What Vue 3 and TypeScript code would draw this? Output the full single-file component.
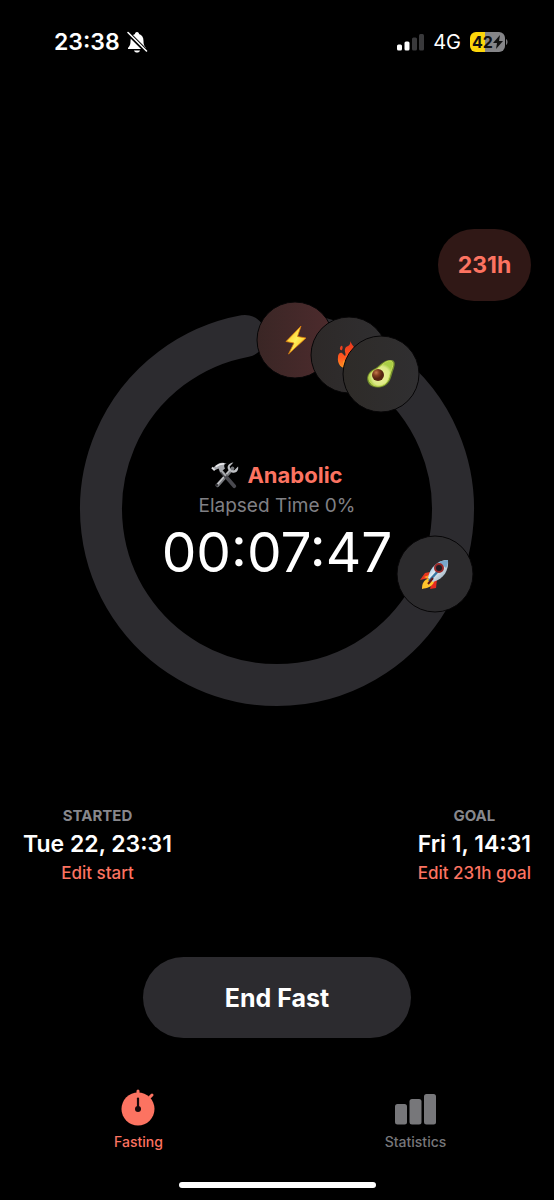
<script setup lang="ts">
interface Stage {
  name: string
  icon: 'bolt' | 'fire' | 'avocado' | 'rocket'
  x: number
  y: number
  fill: string
}

const stages: Stage[] = [
  { name: 'Catabolic', icon: 'bolt', x: 215, y: 40, fill: 'url(#stage-warm)' },
  { name: 'Fat burning', icon: 'fire', x: 269, y: 55, fill: 'url(#stage-grey)' },
  { name: 'Ketosis', icon: 'avocado', x: 301, y: 74, fill: 'url(#stage-olive)' },
  { name: 'Deep ketosis', icon: 'rocket', x: 355, y: 274, fill: '#2c2b2d' },
]

const times = [
  { label: 'STARTED', value: 'Tue 22, 23:31', action: 'Edit start' },
  { label: 'GOAL', value: 'Fri 1, 14:31', action: 'Edit 231h goal' },
]
</script>

<template>
  <div class="screen">
    <header class="status">
      <div class="status-group">
        <span class="clock">23:38</span>
        <svg class="bell" width="22" height="24" viewBox="0 0 22 24" aria-label="Silent">
          <path d="M11 2C9.500 2 9 3 9 4C6 5 4.500 7.500 4.500 11C4.500 15 3.500 16 2 18V19H20V18C18.500 16 17.500 15 17.500 11C17.500 7.500 16 5 13 4C13 3 12.500 2 11 2Z" fill="#fff" />
          <path d="M8 20.500H14C13.500 22 12.500 22.500 11 22.500S8.500 22 8 20.500Z" fill="#fff" />
          <path d="M2 3L20 21" stroke="#000" stroke-width="4" />
          <path d="M2 2.500L20.500 21" stroke="#fff" stroke-width="1.600" stroke-linecap="round" />
        </svg>
      </div>
      <div class="status-group right">
        <svg width="28" height="18" viewBox="0 0 28 18" aria-label="Signal">
          <rect x="1" y="11.500" width="5" height="6" rx="1.500" fill="#fff" />
          <rect x="8.500" y="8.500" width="5" height="9" rx="1.500" fill="#fff" />
          <rect x="16" y="4.500" width="5" height="13" rx="1.500" fill="#39393b" />
          <rect x="23" y="1" width="5" height="16.500" rx="1.500" fill="#39393b" />
        </svg>
        <span class="network">4G</span>
        <span class="battery">
          <span class="battery-text">42</span>
          <svg width="10" height="14" viewBox="0 0 10 14" aria-hidden="true">
            <path d="M7 0L0 8H4L3 14L10 6H6Z" fill="#111" />
          </svg>
        </span>
        <svg class="battery-tip" width="2" height="8" viewBox="0 0 2 8" aria-hidden="true">
          <path d="M0 1C2 2 2 6 0 7Z" fill="#77777a" />
        </svg>
      </div>
    </header>

    <main class="content">
      <button class="goal-pill" type="button">231h</button>

      <section class="dial">
        <svg class="ring" viewBox="0 0 395 410" aria-label="Fasting progress">
          <defs>
            <linearGradient id="stage-warm" x1="0" y1="0" x2="1" y2="0">
              <stop offset="0" stop-color="#3a2625" />
              <stop offset="1" stop-color="#4d2b2d" />
            </linearGradient>
            <linearGradient id="stage-grey" x1="0" y1="0" x2="1" y2="0">
              <stop offset="0" stop-color="#2d2928" />
              <stop offset="1" stop-color="#302f31" />
            </linearGradient>
            <linearGradient id="stage-olive" x1="0" y1="0" x2="1" y2="0">
              <stop offset="0" stop-color="#2e2b28" />
              <stop offset="1" stop-color="#302f31" />
            </linearGradient>
            <linearGradient id="bolt-fill" x1="0" y1="0" x2="1" y2="1">
              <stop offset="0" stop-color="#ffb315" />
              <stop offset="0.500" stop-color="#fff05a" />
              <stop offset="1" stop-color="#ffa500" />
            </linearGradient>
            <linearGradient id="fire-fill" x1="0" y1="0" x2="0" y2="1">
              <stop offset="0" stop-color="#e9341d" />
              <stop offset="0.600" stop-color="#ff5a20" />
              <stop offset="1" stop-color="#ff9a22" />
            </linearGradient>
            <linearGradient id="rocket-fill" x1="0" y1="0" x2="1" y2="1">
              <stop offset="0" stop-color="#4e9bd0" />
              <stop offset="0.450" stop-color="#e6edf2" />
              <stop offset="1" stop-color="#7894aa" />
            </linearGradient>
            <radialGradient id="avocado-fill" cx="0.500" cy="0.600">
              <stop offset="0" stop-color="#f1f29b" />
              <stop offset="0.750" stop-color="#dbe985" />
              <stop offset="1" stop-color="#a9ce46" />
            </radialGradient>
            <radialGradient id="pit-fill" cx="0.350" cy="0.300">
              <stop offset="0" stop-color="#c57a4c" />
              <stop offset="0.500" stop-color="#854021" />
              <stop offset="1" stop-color="#552411" />
            </radialGradient>
          </defs>

          <path class="track" d="M229 36A176 176 0 1 1 165 36" />

          <g v-for="stage in stages" :key="stage.icon" :transform="`translate(${stage.x} ${stage.y})`">
            <title>{{ stage.name }}</title>
            <circle r="38" :fill="stage.fill" stroke="#070607" stroke-width="1" />
            <path
              v-if="stage.icon === 'bolt'"
              d="M6 -14L-9 1.500L-1 3L-6.500 14L11 -2L2.500 -3.500Z"
              fill="url(#bolt-fill)" stroke="#dc7b0b" stroke-width="0.800"
            />
            <g v-else-if="stage.icon === 'fire'">
              <path d="M-8 -9C-6 -10 -6 -7 -7 -5C-9 -4 -10 -7 -8 -9Z" fill="#e84021" />
              <path d="M1 -14C4 -8 8 -6 9 1C12 9 6 14 0 14C-8 14 -12 9 -11 2C-11 -1 -9 -3 -7 -2L-4 1C-2 -1 -6 -4 -3 -8C0 -9 2 -11 1 -14Z" fill="url(#fire-fill)" />
              <path d="M3 1C5 7 6 12 0 13C-6 13 -7 8 -5 5C-3 8 0 7 3 1Z" fill="#ff9b2a" />
            </g>
            <g v-else-if="stage.icon === 'avocado'">
              <path d="M11 -14C15 -13 14 -8 12 -3C10 3 10 7 5 11C-1 15 -9 14 -12 10C-16 4 -13 -2 -7 -5C-1 -8 2 -15 11 -14Z" fill="#718c2d" />
              <path d="M10 -13C13 -12 12 -8 10 -3C8 3 8 7 4 10C-2 14 -9 12 -11 8C-14 3 -11 -2 -6 -4C0 -7 4 -14 10 -13Z" fill="url(#avocado-fill)" stroke="#c6dd55" stroke-width="1" />
              <circle cx="-3" cy="1" r="6" fill="url(#pit-fill)" />
            </g>
            <g v-else transform="translate(0 -1)">
              <path d="M-5 -1L-10 0L-15 7L-6 5Z" fill="#e9361f" />
              <path d="M2 6L1 15L-5 16L-3 9Z" fill="#e72b20" />
              <path d="M-5 5C-12 7 -13 11 -13 16C-8 15 -3 14 -1 9Z" fill="#ffc52c" />
              <path d="M-11 4L-6 2L-7 6Z" fill="#ff9b25" />
              <path d="M13 -13C3 -13 -5 -6 -7 5L-2 9C9 6 14 -3 13 -13Z" fill="url(#rocket-fill)" />
              <path d="M13 -13C9 -13 6 -12 4 -11L11 -5C13 -8 13 -10 13 -13Z" fill="#78a7cc" />
              <path d="M4 -3L-6 8" stroke="#3875a2" stroke-width="2.500" />
              <path d="M-2 5L-7 11" stroke="#60171a" stroke-width="2" />
              <circle cx="4" cy="-5" r="4" fill="#201c23" stroke="#992a2a" stroke-width="2" />
            </g>
          </g>
        </svg>

        <div class="reading">
          <div class="phase">
            <svg width="28" height="28" viewBox="0 0 30 30" aria-hidden="true">
              <path d="M23 8L7 26" stroke="#77797d" stroke-width="4" stroke-linecap="round" />
              <path d="M21 9L7 25" stroke="#c6c7ca" stroke-width="1.500" />
              <path d="M24 1.500L20 6L21 10L25 10L29 6C30 11 26 14 22 12L19 10C16 6 19 2 24 1.500Z" fill="#bfc1c5" />
              <circle cx="6" cy="26" r="1.500" fill="#343438" />
              <path d="M11 11L25 27" stroke="#49494f" stroke-width="4" stroke-linecap="round" />
              <path d="M10 9L16 16" stroke="#a8aaad" stroke-width="2" />
              <path d="M4 6C8 1 13 1 17 3C13 3 14 6 15 8L10 12L8 8L4 10L1 8Z" fill="#a7a9ae" />
              <path d="M5 6C9 3 11 3 14 3" stroke="#eeeeef" stroke-width="1.500" fill="none" />
              <path d="M1 7L4 10" stroke="#dedee1" stroke-width="2" />
            </svg>
            <span>Anabolic</span>
          </div>
          <div class="elapsed">Elapsed Time 0%</div>
          <div class="timer">00:07:47</div>
        </div>
      </section>

      <section class="times">
        <div v-for="time in times" :key="time.label" class="time">
          <span class="time-label">{{ time.label }}</span>
          <span class="time-value">{{ time.value }}</span>
          <button class="edit" type="button">{{ time.action }}</button>
        </div>
      </section>

      <button class="end" type="button">End Fast</button>
    </main>

    <nav class="tabs">
      <a class="tab active" href="#fasting" aria-current="page">
        <svg width="44" height="40" viewBox="0 0 44 40" aria-hidden="true">
          <circle cx="21" cy="22" r="16.500" fill="currentColor" />
          <path d="M21 4V10M33 10L35 8" stroke="currentColor" stroke-width="3" stroke-linecap="round" />
          <path d="M21 11.500V21" stroke="#16090a" stroke-width="2.200" stroke-linecap="round" />
          <circle cx="21" cy="22" r="3" fill="#16090a" />
        </svg>
        <span>Fasting</span>
      </a>
      <a class="tab" href="#statistics">
        <svg width="44" height="40" viewBox="0 0 44 40" aria-hidden="true">
          <rect x="1" y="17" width="12" height="20.500" rx="2.500" fill="currentColor" />
          <rect x="15.500" y="12" width="12" height="25.500" rx="2.500" fill="currentColor" />
          <rect x="30" y="7" width="12" height="30.500" rx="2.500" fill="currentColor" />
        </svg>
        <span>Statistics</span>
      </a>
    </nav>
    <div class="home-bar"></div>
  </div>
</template>

<style>
body {
  margin: 0;
  background: #000;
}
</style>

<style scoped>
.screen {
  box-sizing: border-box;
  min-height: 100vh;
  display: flex;
  flex-direction: column;
  background: #000;
  color: #fff;
  font-family: Inter, "Liberation Sans", sans-serif;
}
button {
  border: 0;
  padding: 0;
  background: none;
  font-family: inherit;
  cursor: pointer;
}
.status {
  display: flex;
  justify-content: space-between;
  align-items: center;
  padding: 26px 46px 0 54px;
  height: 32px;
}
.status-group {
  display: flex;
  align-items: center;
  gap: 6px;
}
.right {
  gap: 9px;
}
.clock {
  font-size: 23px;
  font-weight: 600;
}
.network {
  font-size: 20px;
}
.battery {
  display: flex;
  align-items: center;
  justify-content: center;
  width: 35px;
  height: 20px;
  border-radius: 6px;
  background: linear-gradient(90deg, #fdd60a 42%, #858588 42%);
  color: #111;
}
.battery-text {
  font-size: 16px;
  font-weight: 700;
}
.battery-tip {
  margin-left: -8px;
}
.content {
  display: flex;
  flex-direction: column;
}
.goal-pill {
  align-self: flex-end;
  margin: 171px 23px 0 0;
  width: 93px;
  height: 72px;
  border-radius: 36px;
  background: #301816;
  color: #fc7361;
  font-size: 23px;
  font-weight: 700;
}
.dial {
  display: grid;
  place-items: center;
  width: 72%;
  max-width: 395px;
  margin: -1px auto 0;
}
.ring,
.reading {
  grid-area: 1 / 1;
}
.ring {
  display: block;
  width: 100%;
  overflow: visible;
}
.track {
  fill: none;
  stroke: #2c2b2f;
  stroke-width: 42;
  stroke-linecap: round;
}
.reading {
  display: flex;
  flex-direction: column;
  align-items: center;
  padding-top: 32px;
}
.phase {
  display: flex;
  align-items: center;
  gap: 8px;
  color: #fc7361;
  font-size: 22px;
  font-weight: 700;
  line-height: 32px;
}
.elapsed {
  color: #808085;
  font-size: 19px;
  line-height: 30px;
}
.timer {
  font-size: 55px;
  font-weight: 400;
  line-height: 62px;
}
.times {
  display: flex;
  justify-content: space-between;
  padding: 0 23px;
  margin-top: 94px;
}
.time {
  display: flex;
  flex-direction: column;
  align-items: center;
}
.time-label {
  color: #87878c;
  font-size: 15px;
  font-weight: 700;
  line-height: 24px;
}
.time-value {
  font-size: 23px;
  font-weight: 600;
  line-height: 32px;
}
.edit {
  color: #fc7361;
  font-size: 17px;
  font-weight: 500;
  line-height: 26px;
}
.end {
  align-self: center;
  width: 268px;
  height: 81px;
  margin-top: 71px;
  border-radius: 41px;
  background: #2c2b2f;
  color: #fff;
  font-size: 25px;
  font-weight: 700;
}
.tabs {
  display: flex;
  margin-top: 49px;
}
.tab {
  flex: 1;
  display: flex;
  flex-direction: column;
  align-items: center;
  gap: 6px;
  color: #77777a;
  font-size: 14px;
  font-weight: 500;
  line-height: 18px;
  text-decoration: none;
}
.active {
  color: #fc7361;
}
.home-bar {
  width: 197px;
  height: 6px;
  margin: auto auto 12px;
  border-radius: 3px;
  background: #fff;
}
</style>
